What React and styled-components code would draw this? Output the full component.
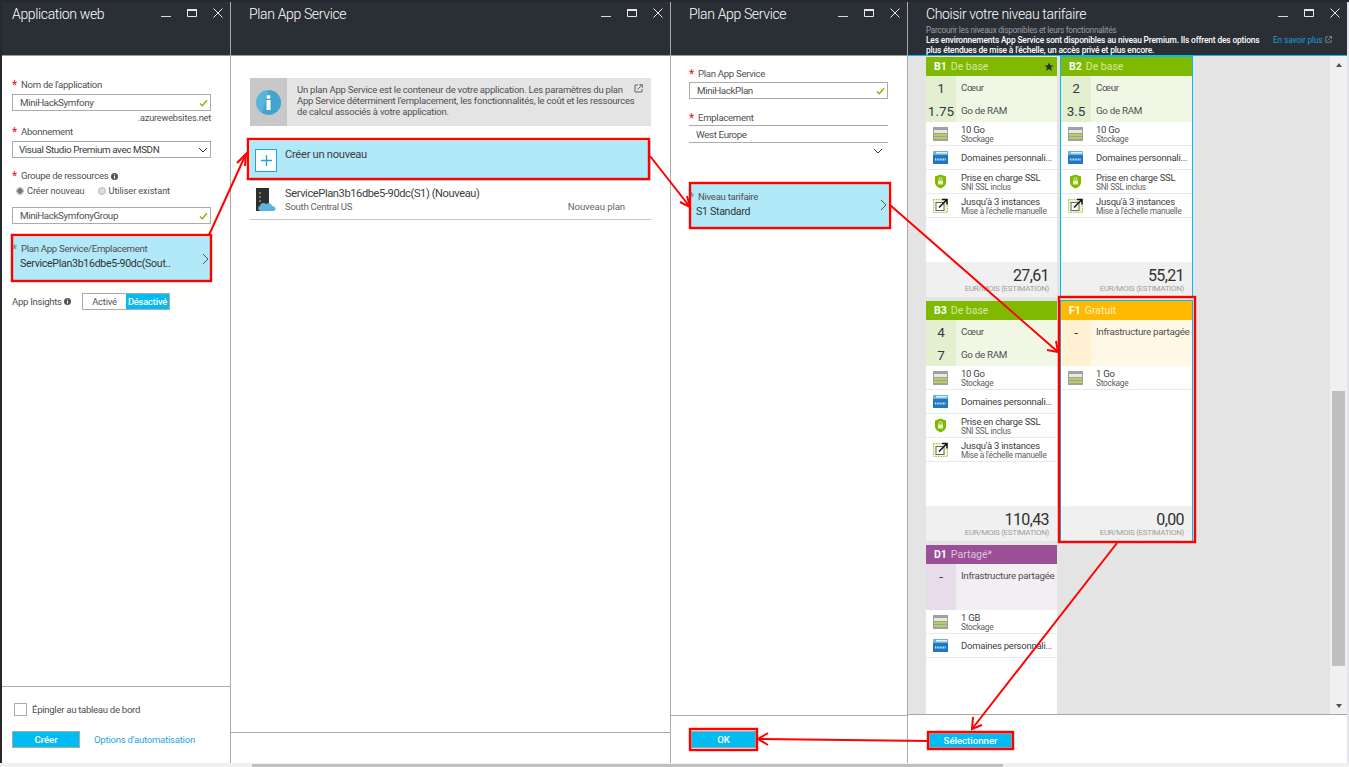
import React from "react";
import styled, { createGlobalStyle } from "styled-components";

const GlobalStyle = createGlobalStyle`
  html, body { margin: 0; padding: 0; }
  body {
    font-family: Roboto, "Open Sans", sans-serif;
    color: #3a3a3a;
    overflow: hidden;
  }
  * { box-sizing: border-box; }
`;

const CYAN = "#00bcf2";
const HILITE = "#b1e9f9";

const tiers = [
  {
    id: "B1",
    name: "De base",
    tone: "green",
    star: true,
    specs: [["1", "Cœur"], ["1.75", "Go de RAM"]],
    storage: "10 Go",
    full: true,
    price: "27,61",
  },
  {
    id: "B2",
    name: "De base",
    tone: "green",
    selected: true,
    specs: [["2", "Cœur"], ["3.5", "Go de RAM"]],
    storage: "10 Go",
    full: true,
    price: "55,21",
  },
  {
    id: "B3",
    name: "De base",
    tone: "green",
    specs: [["4", "Cœur"], ["7", "Go de RAM"]],
    storage: "10 Go",
    full: true,
    price: "110,43",
  },
  {
    id: "F1",
    name: "Gratuit",
    tone: "orange",
    selected: true,
    specs: [["-", "Infrastructure partagée"], ["", ""]],
    storage: "1 Go",
    price: "0,00",
  },
  {
    id: "D1",
    name: "Partagé*",
    tone: "purple",
    specs: [["-", "Infrastructure partagée"], ["", ""]],
    storage: "1 GB",
    domains: true,
    price: "",
  },
];

const tones = {
  green: { head: "#7fba00", sub: "#d5e8a5", body: "#f0f7e5", num: "#e3f0cf" },
  orange: { head: "#ffb900", sub: "#fff0c4", body: "#fff8e6", num: "#fff1d2" },
  purple: { head: "#9b4f96", sub: "#dcc4da", body: "#f3eef4", num: "#e9dcea" },
};

const MinIcon = () => (
  <svg width="12" height="12" viewBox="0 0 12 12">
    <rect x="1" y="9" width="10" height="1" fill="#d8d8d8" />
  </svg>
);
const MaxIcon = () => (
  <svg width="12" height="12" viewBox="0 0 12 12">
    <path d="M1.5 2.5h9v7h-9z" fill="none" stroke="#e8e8e8" />
    <rect x="1" y="2" width="10" height="2" fill="#e8e8e8" />
  </svg>
);
const CloseIcon = () => (
  <svg width="12" height="12" viewBox="0 0 12 12">
    <path d="M1.5 1.5l9 9M10.5 1.5l-9 9" stroke="#e8e8e8" strokeWidth="1" fill="none" />
  </svg>
);
const Check = () => (
  <svg width="9" height="8" viewBox="0 0 9 8">
    <path d="M1 4.5l2.3 2.3L8 1.2" stroke="#7fba00" strokeWidth="1.4" fill="none" />
  </svg>
);
const ChevronDown = () => (
  <svg width="10" height="6" viewBox="0 0 10 6">
    <path d="M1 1l4 4 4-4" stroke="#3a3a3a" strokeWidth="1" fill="none" />
  </svg>
);
const ChevronRight = () => (
  <svg width="7" height="12" viewBox="0 0 7 12">
    <path d="M1 1l5 5-5 5" stroke="#555" strokeWidth="1" fill="none" />
  </svg>
);
const InfoDot = () => (
  <svg width="7" height="7" viewBox="0 0 7 7">
    <circle cx="3.5" cy="3.5" r="3.5" fill="#555" />
    <rect x="3" y="3" width="1" height="2.6" fill="#fff" />
    <rect x="3" y="1.3" width="1" height="1" fill="#fff" />
  </svg>
);
const ExternalIcon = ({ color = "#555", size = 9 }) => (
  <svg width={size} height={size} viewBox="0 0 9 9">
    <path d="M4 1H1v7h7V5" stroke={color} fill="none" strokeWidth="0.9" />
    <path d="M3.5 5.5L8 1M5.2 .7H8.3V3.8" stroke={color} fill="none" strokeWidth="0.9" />
  </svg>
);
const StorageIcon = () => (
  <svg width="15" height="14" viewBox="0 0 15 14">
    <rect width="15" height="14" fill="#a0a0a0" />
    <rect x="1" y="3" width="13" height="3" fill="#e8e8e8" />
    <rect x="1" y="7" width="13" height="2" fill="#b4cf5a" />
    <rect x="1" y="10" width="13" height="2" fill="#b4cf5a" />
  </svg>
);
const DomainIcon = () => (
  <svg width="15" height="13" viewBox="0 0 15 13">
    <rect width="15" height="13" fill="#1e78c4" />
    <rect y="0" width="15" height="4" fill="#6fb2e2" />
    <rect x="3" y="1" width="11" height="1.5" fill="#e8f2fa" />
    <path d="M2 8.500h11" stroke="#cfe5f6" strokeWidth="2" strokeDasharray="1 .6" />
  </svg>
);
const ShieldIcon = () => (
  <svg width="15" height="15" viewBox="0 0 15 15">
    <path d="M7.5 .5l5.5 2v6c0 3-3 5-5.500 6C5 13.500 2 11.500 2 8.500v-6z" fill="#7fba00" />
    <rect x="5" y="6.500" width="5" height="4" fill="#e8f4c8" />
    <path d="M6 6.500V5.200a1.500 1.500 0 0 1 3 0v1.300" stroke="#e8f4c8" fill="none" />
  </svg>
);
const ScaleIcon = () => (
  <svg width="15" height="15" viewBox="0 0 15 15">
    <rect x=".5" y="1.500" width="14" height="13" fill="#eef4d8" stroke="#a8c84a" strokeDasharray="1.500 1" />
    <rect x="3" y="4.500" width="8" height="8" fill="#fff" stroke="#666" />
    <path d="M6 9.500L13.500 2M9 1.500h5v5" stroke="#111" strokeWidth="1.500" fill="none" />
  </svg>
);
const ServerIcon = () => (
  <svg width="23" height="24" viewBox="0 0 23 24">
    <rect x="1" y="1" width="13" height="23" fill="#2b2f33" />
    <path d="M4 6h2M4 10h2M4 14h2" stroke="#d8e020" strokeWidth="1.200" />
    <path d="M6 24c-3 0-4-4-1-5 0-3 4-4 6-2 3-2 6 0 6 2 4 0 5 5 1 5z" fill="#59b4d9" />
  </svg>
);
const BigInfo = () => (
  <svg width="25" height="25" viewBox="0 0 25 25">
    <circle cx="12.500" cy="12.500" r="12.500" fill="#59b4d9" />
    <path d="M12.500 0a12.500 12.500 0 0 1 0 25L6 23z" fill="#3999c6" opacity=".6" />
    <rect x="10.500" y="10" width="4" height="10" fill="#fff" />
    <circle cx="12.500" cy="7" r="2" fill="#fff" />
  </svg>
);
const StarIcon = () => (
  <svg width="10" height="10" viewBox="0 0 10 10">
    <path d="M5 .5l1.400 3h3.200L7 5.600 8 9 5 7.100 2 9l1-3.400L.4 3.500h3.200z" fill="#2a2f35" />
  </svg>
);
const PlusIcon = () => (
  <svg width="11" height="11" viewBox="0 0 11 11">
    <path d="M5.500 0v11M0 5.500h11" stroke="#1aa6e0" strokeWidth="1.300" />
  </svg>
);

const boxes = [
  [12, 235, 199, 46],
  [248, 139, 401, 40],
  [690, 183, 200, 45],
  [1059, 297, 136, 245],
  [690, 729, 67, 21],
  [928, 732, 85, 17],
];
const arrows = [
  { line: "209,235 246,154", head: "237,163 246,154 245,166" },
  { line: "650,156 690,207", head: "680,202 690,207 687,196" },
  { line: "890,205 1058,352", head: "1047,350 1058,352 1056,341" },
  { line: "1117,543 972,729", head: "982,725 972,729 973,717" },
  { line: "928,741 758,739", head: "768,733 758,739 768,745" },
];

const Annotations = () => (
  <Overlay viewBox="0 0 1349 767" width="1349" height="767">
    {boxes.map(([x, y, w, h]) => (
      <rect key={x + "-" + y} x={x} y={y} width={w} height={h} fill="none" stroke="#f00" strokeWidth="2.400" />
    ))}
    {arrows.map((a) => (
      <g key={a.line} fill="none" stroke="#f00" strokeWidth="2">
        <polyline points={a.line} />
        <polyline points={a.head} />
      </g>
    ))}
  </Overlay>
);

const BladeHeader = ({ title, children, $accent }) => (
  <Header $accent={$accent}>
    <HeaderText>
      <Title>{title}</Title>
      {children}
    </HeaderText>
    <HeaderButtons>
      <MinIcon />
      <MaxIcon />
      <CloseIcon />
    </HeaderButtons>
  </Header>
);

const Required = ({ children, $top, $muted, info }) => (
  <Label $top={$top}>
    <Star $muted={$muted}>*</Star>
    {children}
    {info && <InfoDot />}
  </Label>
);

const Feature = ({ icon, main, sub }) => (
  <FeatureRow>
    <FeatureIcon>{icon}</FeatureIcon>
    <FeatureText>
      <FeatureMain>{main}</FeatureMain>
      {sub && <FeatureSub>{sub}</FeatureSub>}
    </FeatureText>
  </FeatureRow>
);

const TierCard = ({ tier }) => {
  const tone = tones[tier.tone];
  return (
    <Card $selected={tier.selected}>
      <CardHead $bg={tone.head}>
        <TierId>{tier.id}</TierId>
        <TierName $color={tone.sub}>{tier.name}</TierName>
        {tier.star && (
          <StarSlot>
            <StarIcon />
          </StarSlot>
        )}
      </CardHead>
      <Specs $bg={tone.body}>
        {tier.specs.map(([n, label], i) => (
          <SpecRow key={i}>
            <SpecNum $bg={tone.num}>{n}</SpecNum>
            <SpecLabel>{label}</SpecLabel>
          </SpecRow>
        ))}
      </Specs>
      <Features>
        <Feature icon={<StorageIcon />} main={tier.storage} sub="Stockage" />
        {(tier.full || tier.domains) && <Feature icon={<DomainIcon />} main="Domaines personnali..." />}
        {tier.full && <Feature icon={<ShieldIcon />} main="Prise en charge SSL" sub="SNI SSL inclus" />}
        {tier.full && <Feature icon={<ScaleIcon />} main="Jusqu'à 3 instances" sub="Mise à l'échelle manuelle" />}
      </Features>
      {tier.price && (
        <Price>
          <PriceValue>{tier.price}</PriceValue>
          <PriceUnit>EUR/MOIS (ESTIMATION)</PriceUnit>
        </Price>
      )}
    </Card>
  );
};

const App = () => (
  <Page>
    <GlobalStyle />
    <Row>
      <Blade $width={229}>
        <BladeHeader title="Application web" />
        <Body $pad="22px 0 0 10px">
          <Required>Nom de l'application</Required>
          <Input $top={2}>
            MiniHackSymfony
            <Check />
          </Input>
          <Suffix>.azurewebsites.net</Suffix>
          <Required $top={1}>Abonnement</Required>
          <Input $top={2}>
            <SelectText>Visual Studio Premium avec MSDN</SelectText>
            <ChevronDown />
          </Input>
          <Required $top={11} info>
            Groupe de ressources
          </Required>
          <RadioRow>
            <Radio $on />
            Créer nouveau
            <RadioGap />
            <Radio />
            Utiliser existant
          </RadioRow>
          <Input $top={9}>
            MiniHackSymfonyGroup
            <Check />
          </Input>
          <PickerRow $top={13} $width={198}>
            <PickerText $lift={6}>
              <Required $muted>Plan App Service/Emplacement</Required>
              <PickerValue>ServicePlan3b16dbe5-90dc(Sout..</PickerValue>
            </PickerText>
            <ChevronRight />
          </PickerRow>
          <InsightsRow>
            <InsightsLabel>
              App Insights <InfoDot />
            </InsightsLabel>
            <Toggle>
              <ToggleOption>Activé</ToggleOption>
              <ToggleOption $on>Désactivé</ToggleOption>
            </Toggle>
          </InsightsRow>
        </Body>
        <Footer $height={77} $pad="16px 0 0 10px">
          <PinRow>
            <Checkbox />
            Épingler au tableau de bord
          </PinRow>
          <FooterActions>
            <PrimaryButton $width={68} $height={17}>Créer</PrimaryButton>
            <AutomationLink>Options d'automatisation</AutomationLink>
          </FooterActions>
        </Footer>
      </Blade>

      <Blade $width={440}>
        <BladeHeader title="Plan App Service" />
        <Body $pad="22px 19px 0">
          <InfoBox>
            <InfoIconCell>
              <BigInfo />
            </InfoIconCell>
            <InfoText>
              Un plan App Service est le conteneur de votre application. Les paramètres du plan App Service
              déterminent l'emplacement, les fonctionnalités, le coût et les ressources de calcul associés à
              votre application.
            </InfoText>
            <InfoLink>
              <ExternalIcon />
            </InfoLink>
          </InfoBox>
          <CreateRow>
            <PlusBox>
              <PlusIcon />
            </PlusBox>
            Créer un nouveau
          </CreateRow>
          <PlanRow>
            <ServerIcon />
            <PlanText>
              <PlanName>ServicePlan3b16dbe5-90dc(S1) (Nouveau)</PlanName>
              <PlanMeta>
                <span>South Central US</span>
                <NewPlan>Nouveau plan</NewPlan>
              </PlanMeta>
            </PlanText>
          </PlanRow>
        </Body>
        <Footer $height={31} />
      </Blade>

      <Blade $width={237}>
        <BladeHeader title="Plan App Service" />
        <Body $pad="11px 0 0 18px">
          <Required>Plan App Service</Required>
          <Input $top={1}>
            MiniHackPlan
            <Check />
          </Input>
          <Required $top={12}>Emplacement</Required>
          <LocationInput>West Europe</LocationInput>
          <LocationChevron>
            <ChevronDown />
          </LocationChevron>
          <PickerRow $top={29} $width={199}>
            <PickerText $lift={2}>
              <Required $muted>Niveau tarifaire</Required>
              <TierValue>S1 Standard</TierValue>
            </PickerText>
            <ChevronRight />
          </PickerRow>
        </Body>
        <Footer $height={48} $pad="15px 0 0 20px">
          <PrimaryButton $width={65} $height={17}>OK</PrimaryButton>
        </Footer>
      </Blade>

      <Blade $width={439} $last>
        <BladeHeader title="Choisir votre niveau tarifaire" $accent>
          <HeaderSub>Parcourir les niveaux disponibles et leurs fonctionnalités</HeaderSub>
          <PromoRow>
            <PromoText>
              Les environnements App Service sont disponibles au niveau Premium. Ils offrent des options plus
              étendues de mise à l'échelle, un accès privé et plus encore.
            </PromoText>
            <PromoLink>
              En savoir plus <ExternalIcon color="#8aa" size={7} />
            </PromoLink>
          </PromoRow>
        </BladeHeader>
        <TierPane>
          <TierGrid>
            {tiers.map((t) => (
              <TierCard key={t.id} tier={t} />
            ))}
          </TierGrid>
          <ScrollTrack>
            <ScrollArrow $up />
            <ScrollThumbSlot>
              <ScrollThumb />
            </ScrollThumbSlot>
            <ScrollArrow />
          </ScrollTrack>
        </TierPane>
        <Footer $height={49} $pad="18px 0 0 21px">
          <PrimaryButton $width={83} $height={15}>Sélectionner</PrimaryButton>
        </Footer>
      </Blade>
      <RightEdge />
    </Row>
    <BottomScroll>
      <BottomThumb />
    </BottomScroll>
    <Annotations />
  </Page>
);

export default App;

const Page = styled.div`
  position: relative;
  width: 1349px;
  height: 767px;
  display: flex;
  flex-direction: column;
  background: #fff;
  overflow: hidden;
`;

const Row = styled.div`
  flex: 1;
  min-height: 0;
  display: flex;
  padding: 2px 0 0 2px;
  background: #25292e;
`;

const RightEdge = styled.div`
  flex: 0 0 2px;
  background: #e4e4ee;
`;

const BottomScroll = styled.div`
  flex: 0 0 4px;
  padding: 1px 0 0 252px;
  background: #f0f0f0;
`;

const BottomThumb = styled.div`
  width: 751px;
  height: 3px;
  background: #c0c0c0;
`;

const Overlay = styled.svg`
  position: absolute;
  left: 0;
  top: 0;
  pointer-events: none;
`;

const Blade = styled.section`
  flex: 0 0 ${(p) => p.$width}px;
  min-width: 0;
  display: flex;
  flex-direction: column;
  background: #fff;
  border-right: ${(p) => (p.$last ? "0" : "1px solid #a9a9a9")};
`;

const Header = styled.header`
  flex: 0 0 54px;
  display: flex;
  justify-content: space-between;
  background: #2a2f35;
  border-bottom: 1px solid ${(p) => (p.$accent ? CYAN : "#9a9a9a")};
  color: #fff;
`;

const HeaderText = styled.div`
  flex: 1;
  min-width: 0;
  padding: 3px 0 0 18px;
  ${Blade}:first-child & { padding-left: 10px; }
`;

const Title = styled.div`
  font-size: 14px;
  font-weight: 300;
  line-height: 19px;
  letter-spacing: -0.35px;
`;

const HeaderButtons = styled.div`
  display: flex;
  gap: 14px;
  padding: 5px 6px 0 0;
  height: 20px;
`;

const HeaderSub = styled.div`
  font-size: 8.200px;
  letter-spacing: -0.25px;
  line-height: 10px;
  color: #9a9ea3;
  margin-top: 1px;
`;

const PromoRow = styled.div`
  display: flex;
  width: 424px;
  margin-right: -100px;
  position: relative;
  z-index: 1;
`;

const PromoText = styled.div`
  flex: 0 0 340px;
  font-size: 8.400px;
  letter-spacing: -0.15px;
  font-weight: 500;
  line-height: 10px;
`;

const PromoLink = styled.div`
  margin-left: 7px;
  font-size: 8.400px;
  letter-spacing: -0.15px;
  line-height: 10px;
  color: #1a9ed8;
  white-space: nowrap;
`;

const Body = styled.div`
  flex: 1;
  min-height: 0;
  padding: ${(p) => p.$pad};
`;

const Footer = styled.footer`
  flex: 0 0 ${(p) => p.$height}px;
  padding: ${(p) => p.$pad || 0};
  border-top: 1px solid #a9a9a9;
`;

const Label = styled.div`
  display: flex;
  align-items: center;
  gap: 3px;
  margin-top: ${(p) => p.$top || 0}px;
  font-size: 9.600px;
  letter-spacing: -0.3px;
  line-height: 14px;
  color: #505050;
`;

const Star = styled.span`
  flex: 0 0 6px;
  color: ${(p) => (p.$muted ? "#8c7f8a" : "#e8112d")};
  font-size: 12px;
  line-height: 12px;
`;

const Input = styled.div`
  width: 199px;
  height: 17px;
  margin-top: ${(p) => p.$top || 0}px;
  padding: 0 2px 0 7px;
  display: flex;
  align-items: center;
  justify-content: space-between;
  border: 1px solid #ababab;
  font-size: 9.800px;
  letter-spacing: -0.38px;
  color: #505050;
`;

const SelectText = styled.span`
  margin-left: -1px;
  color: #3a3a3a;
`;

const Suffix = styled.div`
  width: 199px;
  text-align: right;
  font-size: 9.200px;
  letter-spacing: -0.2px;
  line-height: 13px;
  color: #505050;
`;

const RadioRow = styled.div`
  display: flex;
  align-items: center;
  gap: 3px;
  padding-left: 4px;
  margin-top: 1px;
  font-size: 9.200px;
  letter-spacing: -0.1px;
  line-height: 14px;
  color: #505050;
`;

const RadioGap = styled.span`
  width: 7px;
`;

const Radio = styled.span`
  width: 8px;
  height: 8px;
  border-radius: 50%;
  border: 1px solid #b8b8b8;
  background: ${(p) => (p.$on ? "radial-gradient(circle, #777 0 2.500px, #eee 3px)" : "#ddd")};
`;

const PickerRow = styled.div`
  width: ${(p) => p.$width}px;
  height: 44px;
  margin-top: ${(p) => p.$top}px;
  padding-right: 1px;
  display: flex;
  align-items: center;
  justify-content: space-between;
  background: ${HILITE};
`;

const PickerText = styled.div`
  min-width: 0;
  padding-bottom: ${(p) => p.$lift}px;
`;

const PickerValue = styled.div`
  padding-left: 8px;
  font-size: 10.600px;
  letter-spacing: -0.3px;
  line-height: 15px;
  color: #333;
  white-space: nowrap;
`;

const TierValue = styled(PickerValue)`
  padding-left: 7px;
`;

const InsightsRow = styled.div`
  display: flex;
  align-items: center;
  margin-top: 12px;
`;

const InsightsLabel = styled.div`
  flex: 0 0 70px;
  font-size: 9.600px;
  letter-spacing: -0.3px;
  color: #505050;
`;

const Toggle = styled.div`
  display: flex;
  width: 88px;
  height: 17px;
  border: 1px solid #ababab;
`;

const ToggleOption = styled.div`
  flex: 1;
  display: flex;
  align-items: center;
  justify-content: center;
  font-size: 9.400px;
  letter-spacing: -0.2px;
  font-weight: ${(p) => (p.$on ? 500 : 400)};
  color: ${(p) => (p.$on ? "#fff" : "#505050")};
  background: ${(p) => (p.$on ? CYAN : "#fff")};
`;

const PinRow = styled.div`
  display: flex;
  align-items: center;
  gap: 5px;
  padding-left: 2px;
  font-size: 9.600px;
  letter-spacing: -0.3px;
  color: #505050;
`;

const Checkbox = styled.span`
  width: 13px;
  height: 13px;
  border: 1px solid #ababab;
`;

const FooterActions = styled.div`
  display: flex;
  align-items: center;
  gap: 14px;
  margin-top: 15px;
`;

const PrimaryButton = styled.div`
  width: ${(p) => p.$width}px;
  height: ${(p) => p.$height}px;
  display: flex;
  align-items: center;
  justify-content: center;
  background: ${CYAN};
  border: 1px solid #a9a9a9;
  color: #fff;
  font-size: 9.600px;
  font-weight: 500;
`;

const AutomationLink = styled.span`
  font-size: 9.600px;
  letter-spacing: -0.25px;
  color: #2aa8e0;
`;

const InfoBox = styled.div`
  position: relative;
  display: flex;
  width: 401px;
  height: 48px;
  background: #e4e4e4;
`;

const InfoIconCell = styled.div`
  flex: 0 0 37px;
  display: flex;
  align-items: center;
  justify-content: center;
  background: #c8c8c8;
`;

const InfoText = styled.div`
  flex: 0 0 352px;
  padding: 6px 0 0 10px;
  font-size: 9.500px;
  letter-spacing: -0.22px;
  line-height: 11px;
  color: #505050;
`;

const InfoLink = styled.span`
  position: absolute;
  right: 8px;
  top: 6px;
  display: flex;
`;

const CreateRow = styled.div`
  display: flex;
  align-items: flex-start;
  width: 401px;
  height: 40px;
  margin-top: 15px;
  gap: 8px;
  padding: 6px 0 0 5px;
  background: ${HILITE};
  font-size: 11.200px;
  letter-spacing: -0.3px;
  line-height: 15px;
  color: #404040;
`;

const PlusBox = styled.span`
  width: 22px;
  height: 23px;
  margin-top: 2px;
  display: flex;
  align-items: center;
  justify-content: center;
  background: #fff;
  border: 1px solid #1aa6e0;
`;

const PlanRow = styled.div`
  display: flex;
  width: 401px;
  height: 39px;
  gap: 7px;
  padding: 6px 26px 0 5px;
  border-bottom: 1px solid #c4c4c4;
`;

const PlanText = styled.div`
  flex: 1;
`;

const PlanName = styled.div`
  font-size: 11.100px;
  letter-spacing: -0.4px;
  line-height: 14px;
  color: #404040;
`;

const PlanMeta = styled.div`
  display: flex;
  justify-content: space-between;
  font-size: 9.600px;
  letter-spacing: -0.3px;
  line-height: 12px;
  color: #666;
`;

const NewPlan = styled.span`
  letter-spacing: -0.1px;
`;

const LocationInput = styled.div`
  width: 199px;
  height: 18px;
  padding: 2px 0 0 7px;
  border-top: 1px solid #ababab;
  border-bottom: 1px solid #ababab;
  font-size: 9.800px;
  letter-spacing: -0.38px;
  line-height: 13px;
  color: #505050;
`;

const LocationChevron = styled.div`
  display: flex;
  justify-content: flex-end;
  height: 6px;
  margin-top: 5px;
  padding-right: 24px;
`;

const TierPane = styled.div`
  flex: 1;
  min-height: 0;
  display: flex;
  justify-content: space-between;
  overflow: hidden;
  background: #e4e4e4;
`;

const TierGrid = styled.div`
  display: grid;
  grid-template-columns: 133px 133px;
  grid-auto-rows: 242px;
  column-gap: 2px;
  row-gap: 2px;
  padding: 0 0 0 17px;
  height: 100%;
  align-content: start;
`;

const Card = styled.article`
  display: flex;
  flex-direction: column;
  background: #fff;
  background-clip: padding-box;
  border: 1px solid ${(p) => (p.$selected ? CYAN : "transparent")};
`;

const CardHead = styled.div`
  flex: 0 0 19px;
  display: flex;
  align-items: center;
  gap: 4px;
  padding: 0 3px 0 8px;
  background: ${(p) => p.$bg};
  font-size: 10.500px;
`;

const TierId = styled.span`
  color: #fff;
  font-weight: 700;
`;

const TierName = styled.span`
  color: ${(p) => p.$color};
`;

const StarSlot = styled.span`
  margin-left: auto;
  display: flex;
`;

const Specs = styled.div`
  flex: 0 0 46px;
  display: flex;
  flex-direction: column;
  background: ${(p) => p.$bg};
`;

const SpecRow = styled.div`
  flex: 1;
  display: flex;
`;

const SpecNum = styled.div`
  flex: 0 0 30px;
  display: flex;
  align-items: center;
  justify-content: center;
  background: ${(p) => p.$bg};
  font-size: 13.500px;
  color: #2f3a4a;
`;

const SpecLabel = styled.div`
  padding-left: 5px;
  display: flex;
  align-items: center;
  font-size: 9.800px;
  letter-spacing: -0.3px;
  color: #505050;
  white-space: nowrap;
`;

const Features = styled.div`
  flex: 1;
  min-height: 0;
`;

const FeatureRow = styled.div`
  height: 24px;
  display: flex;
  align-items: center;
  border-bottom: 1px solid #e8e8f0;
`;

const FeatureIcon = styled.div`
  flex: 0 0 35px;
  display: flex;
  padding-left: 7px;
`;

const FeatureText = styled.div`
  min-width: 0;
  padding-top: 1px;
`;

const FeatureMain = styled.div`
  font-size: 9.500px;
  letter-spacing: -0.25px;
  line-height: 10px;
  color: #404040;
  white-space: nowrap;
`;

const FeatureSub = styled.div`
  font-size: 8.300px;
  letter-spacing: -0.25px;
  line-height: 8px;
  color: #606060;
  white-space: nowrap;
`;

const Price = styled.div`
  flex: 0 0 35px;
  padding: 5px 8px 0 0;
  background: #f0f0f0;
  text-align: right;
`;

const PriceValue = styled.div`
  font-size: 16px;
  letter-spacing: -0.6px;
  line-height: 17px;
  color: #303030;
`;

const PriceUnit = styled.div`
  font-size: 8px;
  letter-spacing: -0.32px;
  line-height: 9px;
  color: #a0a0a0;
  white-space: nowrap;
`;

const ScrollTrack = styled.div`
  flex: 0 0 17px;
  display: flex;
  flex-direction: column;
  background: #f0f0f0;
`;

const ScrollArrow = styled.div`
  flex: 0 0 17px;
  display: flex;
  align-items: center;
  justify-content: center;
  &::before {
    content: "";
    border-left: 3.500px solid transparent;
    border-right: 3.500px solid transparent;
    ${(p) => (p.$up ? "border-bottom: 4px solid #505050;" : "border-top: 4px solid #505050;")}
  }
`;

const ScrollThumbSlot = styled.div`
  flex: 1;
  padding: 318px 2px 31px;
`;

const ScrollThumb = styled.div`
  height: 100%;
  background: #c0c0c0;
`;
